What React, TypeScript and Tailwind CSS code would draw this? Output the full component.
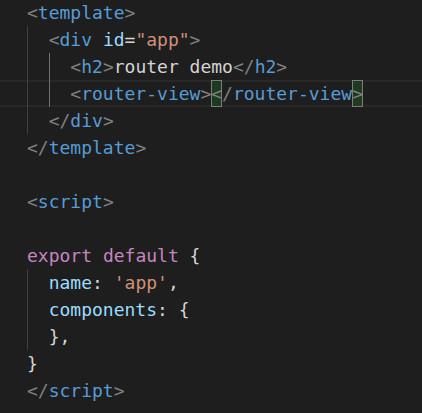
import React from "react";

type Tok = [string, string];

const G = "text-[#808080]";
const B = "text-[#569cd6]";
const A = "text-[#9cdcfe]";
const S = "text-[#ce9178]";
const T = "text-[#d4d4d4]";
const K = "text-[#c586c0]";

function Guide({ active }: { active?: boolean }) {
  return (
    <span
      className={
        "w-[21.68px] shrink-0 self-stretch border-l " +
        (active ? "border-[#6e6e6e]" : "border-[#404040]")
      }
    />
  );
}

function Match({ ch }: { ch: string }) {
  return (
    <span className="w-[10.84px] shrink-0 self-stretch border border-[#7c7c7c] bg-[#1e3a1f] flex items-center justify-center text-[#808080] leading-none">
      {ch}
    </span>
  );
}

function Toks({ toks }: { toks: Tok[] }) {
  return (
    <>
      {toks.map(([t, c], i) => (
        <span key={i} className={c + " whitespace-pre"}>
          {t}
        </span>
      ))}
    </>
  );
}

function Line({
  children,
  current,
}: {
  children?: React.ReactNode;
  current?: boolean;
}) {
  return (
    <div
      className={
        "flex h-[27px] items-center pl-[27px] whitespace-pre " +
        (current
          ? "shadow-[inset_0_2px_0_#282828,inset_0_-2px_0_#282828]"
          : "")
      }
    >
      {children}
    </div>
  );
}

export default function App() {
  return (
    <div
      className="w-full h-screen bg-[#1e1e1e] overflow-hidden text-[18px] leading-[27px]"
      style={{ fontFamily: '"DejaVu Sans Mono", "Liberation Mono", monospace' }}
    >
      <div className="-mt-px">
        <Line>
          <Toks toks={[["<", G], ["template", B], [">", G]]} />
        </Line>
        <Line>
          <Guide />
          <Toks
            toks={[
              ["<", G],
              ["div", B],
              [" ", T],
              ["id", A],
              ["=", T],
              ['"app"', S],
              [">", G],
            ]}
          />
        </Line>
        <Line>
          <Guide />
          <Guide active />
          <Toks
            toks={[
              ["<", G],
              ["h2", B],
              [">", G],
              ["router demo", T],
              ["</", G],
              ["h2", B],
              [">", G],
            ]}
          />
        </Line>
        <Line current>
          <Guide />
          <Guide active />
          <Toks toks={[["<", G], ["router-view", B], [">", G]]} />
          <Match ch="<" />
          <Toks toks={[["/", G], ["router-view", B]]} />
          <Match ch=">" />
        </Line>
        <Line>
          <Guide />
          <Toks toks={[["</", G], ["div", B], [">", G]]} />
        </Line>
        <Line>
          <Toks toks={[["</", G], ["template", B], [">", G]]} />
        </Line>
        <Line />
        <Line>
          <Toks toks={[["<", G], ["script", B], [">", G]]} />
        </Line>
        <Line />
        <Line>
          <Toks
            toks={[
              ["export", K],
              [" ", T],
              ["default", K],
              [" {", T],
            ]}
          />
        </Line>
        <Line>
          <Guide />
          <Toks
            toks={[
              ["name", A],
              [": ", T],
              ["'app'", S],
              [",", T],
            ]}
          />
        </Line>
        <Line>
          <Guide />
          <Toks toks={[["components", A], [": {", T]]} />
        </Line>
        <Line>
          <Guide />
          <Toks toks={[["},", T]]} />
        </Line>
        <Line>
          <Toks toks={[["}", T]]} />
        </Line>
        <Line>
          <Toks toks={[["</", G], ["script", B], [">", G]]} />
        </Line>
      </div>
    </div>
  );
}
